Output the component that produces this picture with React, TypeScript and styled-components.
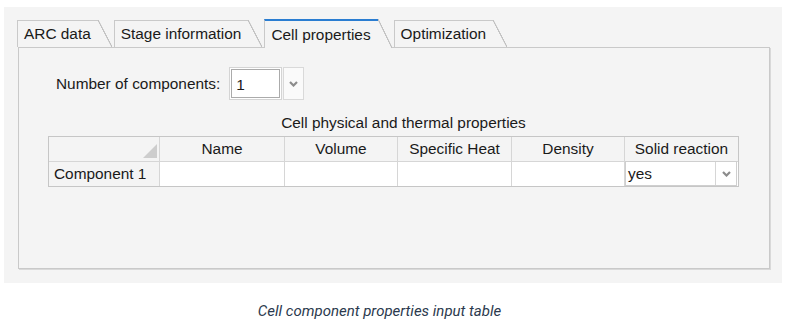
import styled, { createGlobalStyle } from 'styled-components';

const GlobalStyle = createGlobalStyle`
  html, body {
    margin: 0;
    padding: 0;
    background: #ffffff;
  }
  body {
    font-family: 'Liberation Sans', Arial, sans-serif;
  }
`;

const tabs = ['ARC data', 'Stage information', 'Cell properties', 'Optimization'];
const columns = ['Name', 'Volume', 'Specific Heat', 'Density', 'Solid reaction'];

const Chevron = () => (
  <svg width="9" height="6" viewBox="0 0 9 6">
    <path d="M1 1 L4.5 4.5 L8 1" fill="none" stroke="#8c8c8c" strokeWidth="2.2" />
  </svg>
);

const App = () => {
  return (
    <>
      <GlobalStyle />
      <Page>
        <Window>
          <TabBar>
            {tabs.map((t) => (
              <Tab key={t} $active={t === 'Cell properties'}>
                {t}
              </Tab>
            ))}
          </TabBar>
          <Panel>
            <CountRow>
              <Label>Number of components:</Label>
              <NumberInput>1</NumberInput>
              <DropButton>
                <Chevron />
              </DropButton>
            </CountRow>
            <TableBlock>
              <TableTitle>Cell physical and thermal properties</TableTitle>
              <Grid>
                <Cell $head $corner>
                  <Corner />
                </Cell>
                {columns.map((c, i) => (
                  <Cell key={c} $head $last={i === columns.length - 1}>
                    {c}
                  </Cell>
                ))}
                <Cell $head $rowHead $bottom>
                  Component 1
                </Cell>
                {columns.slice(0, 4).map((c) => (
                  <Cell key={c} $bottom />
                ))}
                <Cell $bottom $last>
                  <Combo>
                    <ComboText>yes</ComboText>
                    <ComboButton>
                      <Chevron />
                    </ComboButton>
                  </Combo>
                </Cell>
              </Grid>
            </TableBlock>
          </Panel>
        </Window>
        <Caption>Cell component properties input table</Caption>
      </Page>
    </>
  );
};

const Page = styled.div`
  width: 786px;
  height: 327px;
  padding-top: 7px;
  box-sizing: border-box;
`;

const Window = styled.div`
  margin-left: 4px;
  width: 778px;
  height: 276px;
  box-sizing: border-box;
  background: #f4f4f4;
  padding: 12px 12px 14px 14px;
  display: flex;
  flex-direction: column;
  color: #1a1a1a;
  font-size: 15.4px;
`;

const TabBar = styled.div`
  display: flex;
  align-items: flex-end;
  height: 28px;
  margin-left: -1px;
`;

const Tab = styled.div<{ $active?: boolean }>`
  position: relative;
  z-index: ${(p) => (p.$active ? 2 : 1)};
  box-sizing: border-box;
  height: ${(p) => (p.$active ? 29 : 27)}px;
  margin-bottom: ${(p) => (p.$active ? -1 : 0)}px;
  margin-right: 16px;
  padding: ${(p) => (p.$active ? '1px' : '0')} 7px 0 6px;
  display: flex;
  align-items: center;
  background: #f4f4f4;
  border-left: 1px solid #c9c9c9;
  border-top: ${(p) => (p.$active ? '2px solid #2a7dd1' : '1px solid #c9c9c9')};
  white-space: nowrap;

  &::after {
    content: '';
    position: absolute;
    top: ${(p) => (p.$active ? -2 : -1)}px;
    bottom: 0;
    left: 100%;
    width: 14px;
    background: linear-gradient(
      to top right,
      #f4f4f4 calc(50% - 0.8px),
      #c2c2c2 calc(50% - 0.4px),
      #c2c2c2 calc(50% + 0.4px),
      transparent calc(50% + 0.8px)
    );
  }
`;

const Panel = styled.div`
  flex: 1;
  border: 1px solid #c9c9c9;
  box-shadow: 1px 1px 0 #d9d9d9;
  background: #f4f4f4;
  padding-top: 19px;
`;

const CountRow = styled.div`
  display: flex;
  align-items: center;
  height: 33px;
  padding-left: 37px;
`;

const Label = styled.span`
  margin-right: 9px;
`;

const NumberInput = styled.div`
  box-sizing: border-box;
  width: 53px;
  height: 33px;
  border: 1px solid #d4d4d4;
  box-shadow: inset 0 0 0 1px #ffffff, inset 0 0 0 2px #ababab;
  background: #ffffff;
  padding: 3px 0 0 6px;
  display: flex;
  align-items: center;
`;

const DropButton = styled.div`
  box-sizing: border-box;
  width: 21px;
  height: 33px;
  margin-left: 1px;
  border: 1px solid #d9d9d9;
  background: #fafafa;
  display: flex;
  align-items: center;
  justify-content: center;
`;

const TableBlock = styled.div`
  margin: 14px 0 0 29px;
  width: 691px;
`;

const TableTitle = styled.div`
  height: 18px;
  line-height: 18px;
  text-align: center;
  padding-left: 20px;
  margin-bottom: 4px;
`;

const Grid = styled.div`
  display: grid;
  grid-template-columns: 111px 125px 113px 114px 113px 113px;
  grid-template-rows: 25px 24px;
  border: 1px solid #c6c6c6;
  background: #ffffff;
`;

const Cell = styled.div<{
  $head?: boolean;
  $rowHead?: boolean;
  $corner?: boolean;
  $last?: boolean;
  $bottom?: boolean;
}>`
  position: relative;
  box-sizing: border-box;
  background: ${(p) => (p.$head ? '#f4f4f4' : '#ffffff')};
  border-right: ${(p) => (p.$last ? 'none' : '1px solid #d6d6d6')};
  border-bottom: ${(p) => (p.$bottom ? 'none' : '1px solid #d6d6d6')};
  display: flex;
  align-items: center;
  justify-content: ${(p) => (p.$rowHead ? 'flex-start' : 'center')};
  padding-left: ${(p) => (p.$rowHead ? 5 : 0)}px;
  white-space: nowrap;
`;

const Corner = styled.div`
  position: absolute;
  right: 2px;
  bottom: 3px;
  width: 14px;
  height: 14px;
  background: #cdcdcd;
  clip-path: polygon(100% 0, 100% 100%, 0 100%);
`;

const Combo = styled.div`
  position: absolute;
  left: 0;
  right: 1px;
  top: -1px;
  bottom: 0;
  border: 1px solid #cfcfcf;
  background: #ffffff;
  display: flex;
  align-items: stretch;
`;

const ComboText = styled.div`
  flex: 1;
  display: flex;
  align-items: center;
  padding-left: 2px;
`;

const ComboButton = styled.div`
  width: 20px;
  border-left: 1px solid #d6d6d6;
  display: flex;
  align-items: center;
  justify-content: center;
`;

const Caption = styled.div`
  margin-top: 19px;
  padding-right: 27px;
  text-align: center;
  font-family: Roboto, 'Liberation Sans', sans-serif;
  font-style: italic;
  font-size: 15px;
  color: #2b3a4e;
`;

export default App;
